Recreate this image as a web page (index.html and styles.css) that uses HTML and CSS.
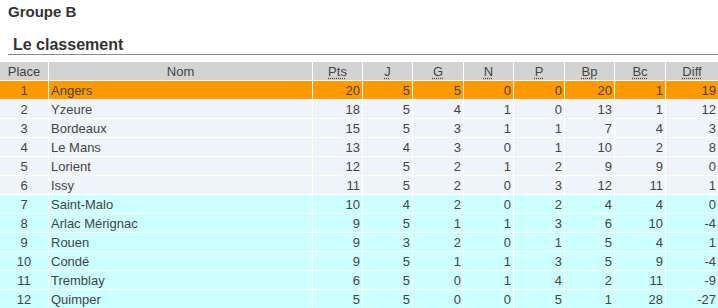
FILE: index.html
```html
<!DOCTYPE html>
<html lang="fr">
<head>
<meta charset="utf-8">
<title>Groupe B - Le classement</title>
<link rel="stylesheet" href="styles.css">
</head>
<body>
<h2 class="group">Groupe B</h2>
<h3 class="title">Le classement</h3>
<table class="standings">
  <colgroup>
    <col class="c-place"><col class="c-nom">
    <col class="c-50"><col class="c-50"><col class="c-51"><col class="c-50">
    <col class="c-51"><col class="c-50"><col class="c-51"><col class="c-52">
  </colgroup>
  <thead>
    <tr>
      <th>Place</th><th>Nom</th>
      <th><abbr title="Points">Pts</abbr></th>
      <th><abbr title="Joués">J</abbr></th>
      <th><abbr title="Gagnés">G</abbr></th>
      <th><abbr title="Nuls">N</abbr></th>
      <th><abbr title="Perdus">P</abbr></th>
      <th><abbr title="Buts pour">Bp</abbr></th>
      <th><abbr title="Buts contre">Bc</abbr></th>
      <th><abbr title="Différence">Diff</abbr></th>
    </tr>
  </thead>
  <tbody>
    <tr class="first"><td>1</td><td>Angers</td><td>20</td><td>5</td><td>5</td><td>0</td><td>0</td><td>20</td><td>1</td><td>19</td></tr>
    <tr class="mid"><td>2</td><td>Yzeure</td><td>18</td><td>5</td><td>4</td><td>1</td><td>0</td><td>13</td><td>1</td><td>12</td></tr>
    <tr class="mid"><td>3</td><td>Bordeaux</td><td>15</td><td>5</td><td>3</td><td>1</td><td>1</td><td>7</td><td>4</td><td>3</td></tr>
    <tr class="mid"><td>4</td><td>Le Mans</td><td>13</td><td>4</td><td>3</td><td>0</td><td>1</td><td>10</td><td>2</td><td>8</td></tr>
    <tr class="mid"><td>5</td><td>Lorient</td><td>12</td><td>5</td><td>2</td><td>1</td><td>2</td><td>9</td><td>9</td><td>0</td></tr>
    <tr class="mid"><td>6</td><td>Issy</td><td>11</td><td>5</td><td>2</td><td>0</td><td>3</td><td>12</td><td>11</td><td>1</td></tr>
    <tr class="low"><td>7</td><td>Saint-Malo</td><td>10</td><td>4</td><td>2</td><td>0</td><td>2</td><td>4</td><td>4</td><td>0</td></tr>
    <tr class="low"><td>8</td><td>Arlac Mérignac</td><td>9</td><td>5</td><td>1</td><td>1</td><td>3</td><td>6</td><td>10</td><td>-4</td></tr>
    <tr class="low"><td>9</td><td>Rouen</td><td>9</td><td>3</td><td>2</td><td>0</td><td>1</td><td>5</td><td>4</td><td>1</td></tr>
    <tr class="low"><td>10</td><td>Condé</td><td>9</td><td>5</td><td>1</td><td>1</td><td>3</td><td>5</td><td>9</td><td>-4</td></tr>
    <tr class="low"><td>11</td><td>Tremblay</td><td>6</td><td>5</td><td>0</td><td>1</td><td>4</td><td>2</td><td>11</td><td>-9</td></tr>
    <tr class="low"><td>12</td><td>Quimper</td><td>5</td><td>5</td><td>0</td><td>0</td><td>5</td><td>1</td><td>28</td><td>-27</td></tr>
  </tbody>
</table>
</body>
</html>
```
FILE: styles.css
```css
html, body {
  margin: 0;
  padding: 0;
  background: #ffffff;
  font-family: "Liberation Sans", Arial, sans-serif;
  color: #444444;
}

.group {
  margin: 0;
  padding: 3px 8px 0;
  font-size: 15px;
  line-height: 17px;
  font-weight: bold;
  color: #333333;
}

.title {
  margin: 16px 0 7px 8px;
  padding: 0 0 0 5px;
  font-size: 16px;
  line-height: 18px;
  font-weight: bold;
  color: #333333;
  border-bottom: 1px solid #8c8c8c;
}

.standings {
  width: 718px;
  table-layout: fixed;
  border-collapse: separate;
  border-spacing: 0;
  font-size: 13px;
}

.c-place { width: 49px; }
.c-nom { width: 264px; }
.c-50 { width: 50px; }
.c-51 { width: 51px; }
.c-52 { width: 52px; }

.standings th,
.standings td {
  height: 18px;
  padding: 0 2px;
  line-height: 15px;
  border-right: 1px solid #ffffff;
  border-bottom: 1px solid #ffffff;
  white-space: nowrap;
  overflow: hidden;
}

.standings th:last-child,
.standings td:last-child {
  border-right: none;
}

.standings th {
  background: #d3d3d3;
  font-weight: normal;
  text-align: center;
  color: #444444;
}

.standings abbr {
  text-decoration: underline dotted;
  text-underline-offset: 2px;
}

.standings td {
  text-align: right;
}

.standings td:first-child {
  text-align: center;
}

.standings td:nth-child(2) {
  text-align: left;
}

.standings tr.first td {
  background: #ff9900;
}

.standings tr.mid td {
  background: #eef4fa;
}

.standings tr.low td {
  background: #ccffff;
}
```
